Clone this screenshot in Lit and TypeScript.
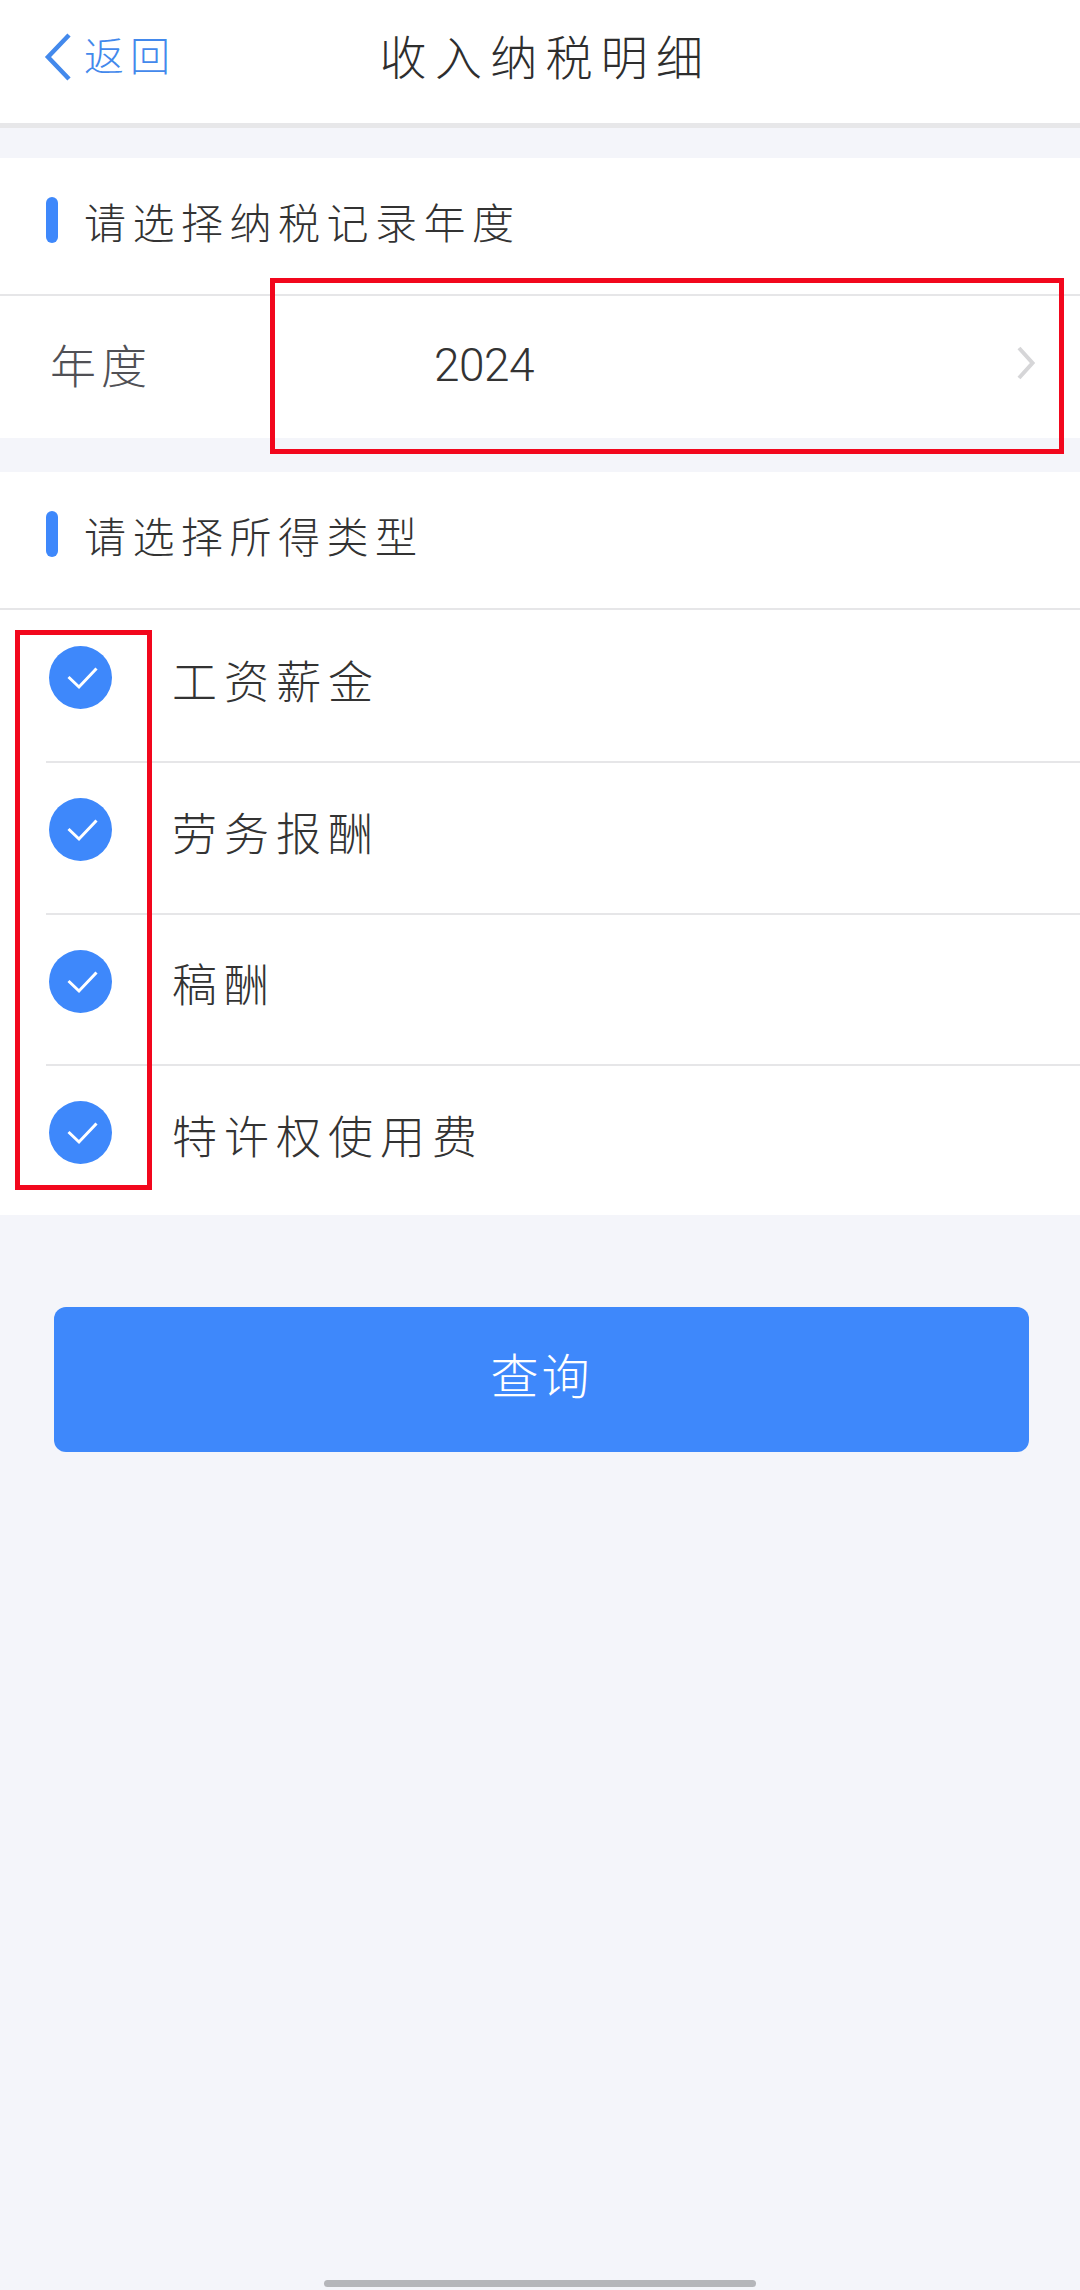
import { LitElement, html, css } from 'lit';
import { customElement, state } from 'lit/decorators.js';

const INCOME_TYPES = ['工资薪金', '劳务报酬', '稿酬', '特许权使用费'];

@customElement('app-root')
export class AppRoot extends LitElement {
  static styles = css`
    :host {
      display: block;
      position: relative;
      width: 1080px;
      height: 2290px;
      overflow: hidden;
      background: #f4f5fa;
      color: #333;
      font-family: 'Noto Sans CJK SC', 'Liberation Sans', sans-serif;
      font-weight: 300;
    }

    .nav {
      display: grid;
      grid-template-columns: 1fr auto 1fr;
      align-items: center;
      height: 114px;
      padding-bottom: 9px;
      background: #fff;
      border-bottom: 5px solid #e7e7e9;
    }

    .back {
      display: flex;
      align-items: center;
      gap: 12px;
      padding-left: 44px;
      color: #4389ec;
      font-size: 40px;
      letter-spacing: 6px;
    }

    .back span {
      padding-bottom: 6px;
    }

    .back svg {
      display: block;
      width: 28px;
      height: 48px;
    }

    .title {
      padding: 0 0 6px 11px;
      font-size: 47px;
      letter-spacing: 8.3px;
      color: #2e2e2e;
    }

    .card {
      background: #fff;
      margin-top: 30px;
    }

    .card + .card {
      margin-top: 34px;
    }

    .head {
      display: flex;
      align-items: center;
      gap: 26px;
      height: 138px;
      padding: 0 0 12px 46px;
      box-sizing: border-box;
      font-size: 42px;
      letter-spacing: 6.5px;
      border-bottom: 2px solid #e6e6e8;
    }

    .head::before {
      content: '';
      width: 12px;
      height: 46px;
      border-radius: 6px;
      background: #3e88fb;
    }

    .year {
      display: flex;
      align-items: center;
      height: 142px;
      padding: 0 44px 8px 50px;
      box-sizing: border-box;
    }

    .year-label {
      width: 384px;
      font-size: 46px;
      letter-spacing: 5px;
      color: #505055;
    }

    .year-value {
      flex: 1;
      padding-top: 3px;
      font-family: Roboto, 'Liberation Sans', sans-serif;
      font-weight: 300;
      font-size: 46px;
      letter-spacing: -0.5px;
    }

    .year svg {
      display: block;
      width: 20px;
      height: 34px;
    }

    .row {
      display: flex;
      align-items: center;
      height: 151.3px;
      box-sizing: border-box;
      margin-left: 46px;
      padding: 0 0 16px 3px;
      gap: 60px;
      font-size: 45px;
      letter-spacing: 7px;
      border-top: 2px solid #e6e6e8;
    }

    .row span {
      padding-top: 3px;
    }

    .head + .row {
      border-top: none;
    }

    .tick {
      display: block;
      width: 63px;
      height: 63px;
      flex: none;
    }

    .query {
      display: block;
      box-sizing: border-box;
      width: 975px;
      height: 145px;
      margin: 92px 0 0 54px;
      padding: 0 0 14px;
      border: none;
      border-radius: 12px;
      background: #3e88fb;
      color: #fff;
      font: inherit;
      font-size: 48px;
      letter-spacing: 3px;
    }

    /* red review markers laid over the form */
    .marker {
      position: absolute;
      box-sizing: border-box;
      border: 5px solid #f2071d;
      pointer-events: none;
    }

    .marker.year-box {
      left: 270px;
      top: 278px;
      width: 794px;
      height: 176px;
    }

    .marker.tick-box {
      left: 15px;
      top: 630px;
      width: 137px;
      height: 560px;
    }

    .home-bar {
      position: absolute;
      left: 324px;
      bottom: 3px;
      width: 432px;
      height: 7px;
      border-radius: 4px;
      background: #b5b6ba;
    }
  `;

  @state() private year = '2024';

  private renderRow(label: string) {
    return html`<div class="row">
      <svg class="tick" viewBox="0 0 63 63">
        <circle cx="31.5" cy="31.5" r="31.5" fill="#3e88fb"></circle>
        <path d="M19.5 31 L30 41 L47.5 22.5" fill="none" stroke="#fff" stroke-width="3"></path>
      </svg>
      <span>${label}</span>
    </div>`;
  }

  render() {
    return html`
      <header class="nav">
        <div class="back">
          <svg viewBox="0 0 28 48">
            <path d="M25 2 L4 24 L25 46" fill="none" stroke="#4389ec" stroke-width="4.5"></path>
          </svg>
          <span>返回</span>
        </div>
        <div class="title">收入纳税明细</div>
      </header>

      <section class="card">
        <div class="head">请选择纳税记录年度</div>
        <div class="year">
          <span class="year-label">年度</span>
          <span class="year-value">${this.year}</span>
          <svg viewBox="0 0 20 34">
            <path d="M3 2 L16.5 17 L3 32" fill="none" stroke="#d6d6d8" stroke-width="4"></path>
          </svg>
        </div>
      </section>

      <section class="card">
        <div class="head">请选择所得类型</div>
        ${INCOME_TYPES.map((label) => this.renderRow(label))}
      </section>

      <button class="query">查询</button>

      <div class="marker year-box"></div>
      <div class="marker tick-box"></div>
      <div class="home-bar"></div>
    `;
  }
}
